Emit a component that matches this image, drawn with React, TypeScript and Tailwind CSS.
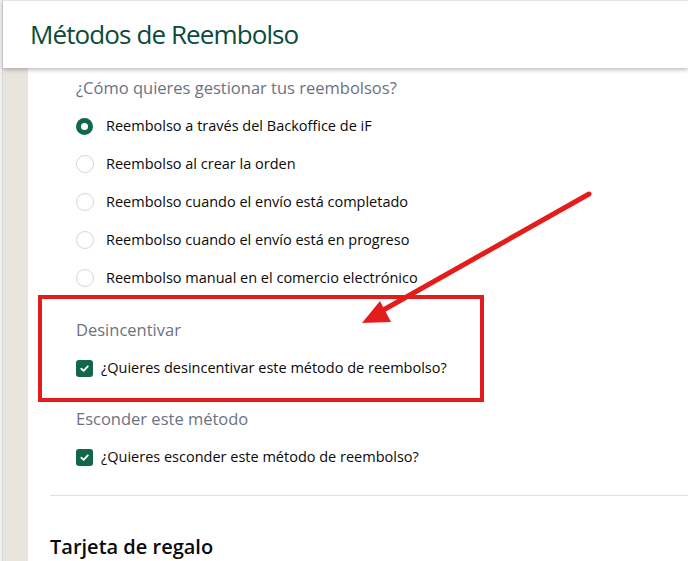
import React from "react";

const body = { fontFamily: "'Open Sans', 'Noto Sans', sans-serif" };
const head = { fontFamily: "'Open Sans', 'Noto Sans', sans-serif" };

function Radio({ checked }: { checked?: boolean }) {
  return checked ? (
    <span className="box-border block w-[17px] h-[17px] rounded-full border-[5px] border-[#12664a] bg-white" />
  ) : (
    <span className="box-border block w-[18px] h-[18px] rounded-full border border-[#d6d6d6] bg-white" />
  );
}

function Check() {
  return (
    <span className="flex items-center justify-center w-[17px] h-[17px] rounded-[3px] bg-[#12664a]">
      <svg width="11" height="11" viewBox="0 0 12 12">
        <path d="M2.5 6.3 L5 8.6 L9.6 3.6" fill="none" stroke="white" strokeWidth="2" strokeLinecap="round" strokeLinejoin="round" />
      </svg>
    </span>
  );
}

const options = [
  "Reembolso a través del Backoffice de iF",
  "Reembolso al crear la orden",
  "Reembolso cuando el envío está completado",
  "Reembolso cuando el envío está en progreso",
  "Reembolso manual en el comercio electrónico",
];

export default function App() {
  return (
    <div className="relative w-[688px] h-[561px] overflow-hidden bg-white" style={body}>
      <div className="flex h-full">
        {/* left strip */}
        <div className="flex w-[28px] shrink-0">
          <div className="w-[2px] bg-[#eef0f0]" />
          <div className="w-[1px] bg-[#d9d9d9]" />
          <div className="flex-1 bg-[#e8e5df]" />
        </div>
        <div className="flex-1 pt-[68px]">
          <div className="pl-[48px]">
            <div className="h-[24px] mt-[8px] flex items-center text-[16.5px] text-[#6b7280]">
              ¿Cómo quieres gestionar tus reembolsos?
            </div>
            <div className="mt-[7px]">
              {options.map((o, i) => (
                <div key={o} className="h-[38px] flex items-center">
                  <div className="w-[30px] flex items-center">
                    <Radio checked={i === 0} />
                  </div>
                  <span className="text-[14.5px] text-[#0a0a0a]">{o}</span>
                </div>
              ))}
            </div>
          </div>
          <div className="ml-[10px] mt-[-2px] w-[446px] h-[107px] border-4 border-[#e41c1c] pl-[34px] pt-[19px]">
            <div className="h-[24px] flex items-center text-[16.5px] text-[#6b7280]">Desincentivar</div>
            <div className="h-[24px] mt-[14px] flex items-center">
              <div className="w-[25px]"><Check /></div>
              <span className="text-[14.5px] text-[#0a0a0a]">¿Quieres desincentivar este método de reembolso?</span>
            </div>
          </div>
          <div className="pl-[48px]">
            <div className="h-[24px] mt-[5px] flex items-center text-[16.5px] text-[#6b7280]">Esconder este método</div>
            <div className="h-[24px] mt-[14px] flex items-center">
              <div className="w-[25px]"><Check /></div>
              <span className="text-[14.5px] text-[#0a0a0a]">¿Quieres esconder este método de reembolso?</span>
            </div>
          </div>
          <div className="ml-[22px] mt-[26px] h-px bg-[#dde0e6]" />
          <div className="ml-[22px] mt-[37px] h-[28px] flex items-center text-[20px] text-[#0a0a0a] font-semibold" style={head}>
            Tarjeta de regalo
          </div>
        </div>
      </div>

      {/* header bar */}
      <div className="absolute left-[3px] right-0 top-0 h-[68px] bg-white border-t border-[#e5e5e5] shadow-[0_2px_4px_rgba(0,0,0,0.25)] flex items-center pl-[27px]">
        <span className="text-[26px] tracking-[-0.9px] text-[#0b4a3c]" style={head}>Métodos de Reembolso</span>
      </div>

      {/* annotation arrow */}
      <svg className="absolute left-0 top-0 pointer-events-none" width="688" height="561">
        <line x1="589" y1="194" x2="378" y2="313" stroke="#e41c1c" strokeWidth="5" strokeLinecap="round" />
        <polygon points="362,323 380,301 391,322" fill="#e41c1c" />
      </svg>
    </div>
  );
}
